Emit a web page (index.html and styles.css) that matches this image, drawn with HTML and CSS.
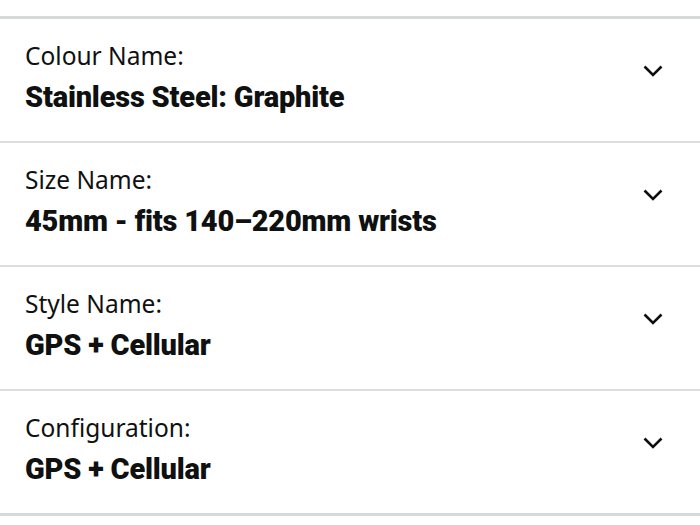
FILE: index.html
```html
<!DOCTYPE html>
<html lang="en">
<head>
  <meta charset="UTF-8">
  <meta name="viewport" content="width=device-width, initial-scale=1.0">
  <title>Product Variations</title>
  <link rel="stylesheet" href="styles.css">
</head>
<body>

  <!-- Variation list -->
  <div class="variations">

    <div class="variation-row">
      <div class="variation-text">
        <div class="variation-label">Colour Name:</div>
        <div class="variation-value">Stainless Steel: Graphite</div>
      </div>
      <svg class="chevron" viewBox="0 0 20 12"><path d="M1.5 1.5 L10 10 L18.5 1.5"/></svg>
    </div>

    <div class="variation-row">
      <div class="variation-text">
        <div class="variation-label">Size Name:</div>
        <div class="variation-value">45mm - fits 140–220mm wrists</div>
      </div>
      <svg class="chevron" viewBox="0 0 20 12"><path d="M1.5 1.5 L10 10 L18.5 1.5"/></svg>
    </div>

    <div class="variation-row">
      <div class="variation-text">
        <div class="variation-label">Style Name:</div>
        <div class="variation-value">GPS + Cellular</div>
      </div>
      <svg class="chevron" viewBox="0 0 20 12"><path d="M1.5 1.5 L10 10 L18.5 1.5"/></svg>
    </div>

    <div class="variation-row">
      <div class="variation-text">
        <div class="variation-label">Configuration:</div>
        <div class="variation-value">GPS + Cellular</div>
      </div>
      <svg class="chevron" viewBox="0 0 20 12"><path d="M1.5 1.5 L10 10 L18.5 1.5"/></svg>
    </div>

  </div>

</body>
</html>
```

FILE: styles.css
```css
/* General Page Styling */
body, html {
  margin: 0;
  padding: 0;
  background-color: white;
  font-family: 'Noto Sans', sans-serif;
  color: #0f1111;
}

/* List with thick top and bottom rules */
.variations {
  margin-top: 16px;
  border-top: 3px solid #d5d9d9;
  border-bottom: 3px solid #d5d9d9;
}

/* One variation row */
.variation-row {
  display: flex;
  align-items: flex-start;
  justify-content: space-between;
  height: 124px;
  padding: 20px 37px 0 25px;
  box-sizing: border-box;
  border-bottom: 2px solid #dddddd;
}

.variation-row:last-child {
  border-bottom: none;
  height: 122px;
}

.variation-label {
  font-size: 24.5px;
  line-height: 34px;
}

.variation-value {
  margin-top: 3px;
  font-family: 'Roboto', sans-serif;
  font-weight: 900;
  font-size: 29px;
  line-height: 42px;
  letter-spacing: -0.2px;
}

/* Dropdown chevron */
.chevron {
  width: 20px;
  height: 12px;
  margin-top: 26px;
  fill: none;
  stroke: #0f1111;
  stroke-width: 2.6;
}
```
